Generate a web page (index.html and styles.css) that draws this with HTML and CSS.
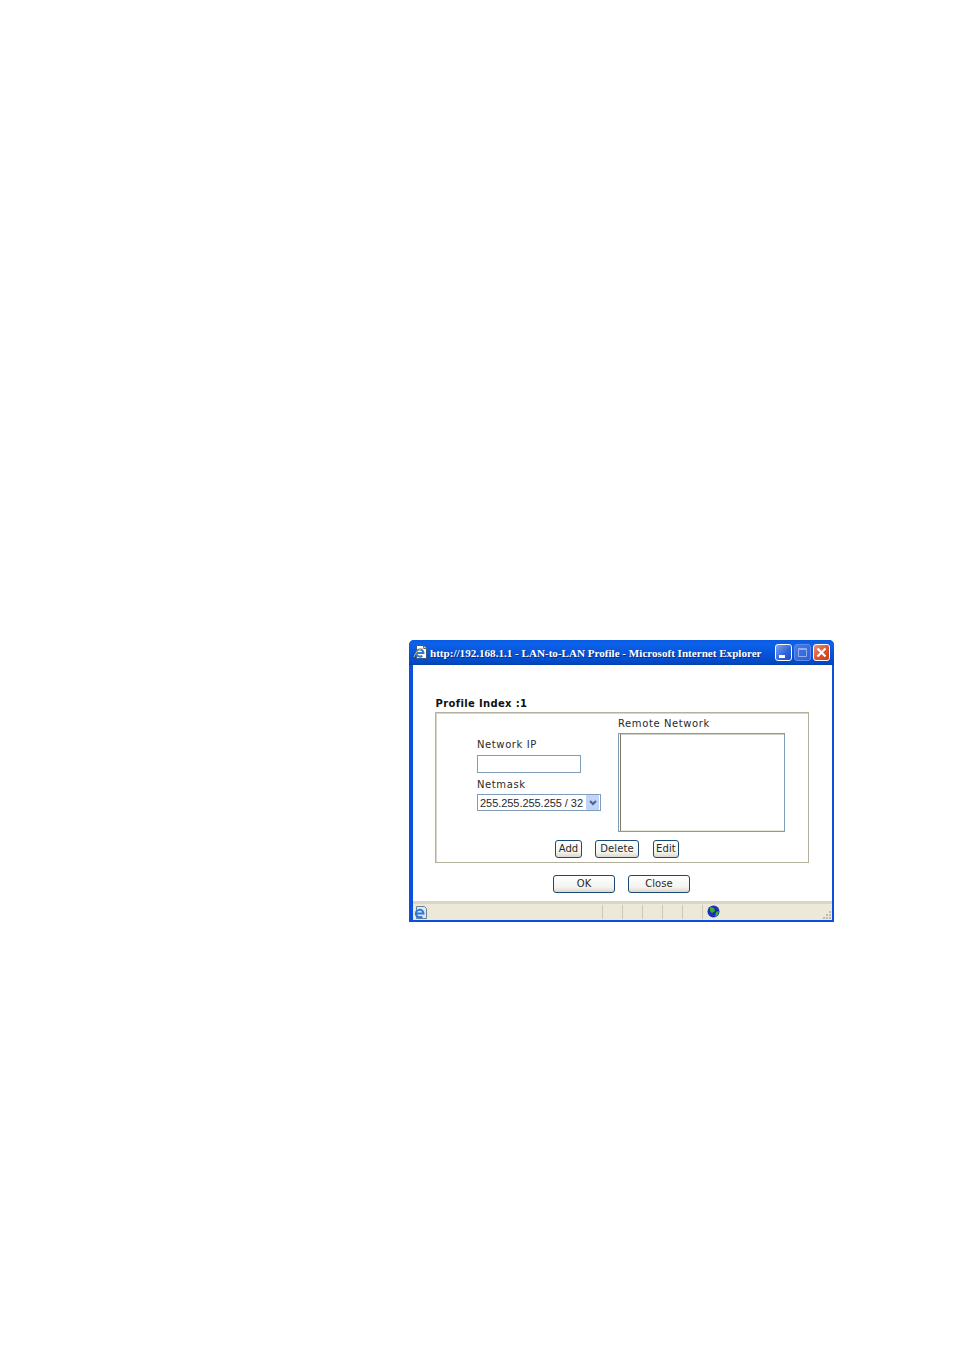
FILE: index.html
```html
<!DOCTYPE html>
<html lang="en">
<head>
  <meta charset="UTF-8">
  <title>LAN-to-LAN Profile</title>
  <link rel="stylesheet" href="styles.css">
</head>
<body>

<div class="window">
  <div class="titlebar">
    <svg class="title-icon" width="16" height="16" viewBox="0 0 16 16">
      <path d="M3.5 1.5h7l3 3v10h-10z" fill="#fff" stroke="#40587c"/>
      <path d="M10.5 1.5v3h3" fill="#cfdcec" stroke="#40587c"/>
      <path d="M3.5 9h7a3.6 3.6 0 1 0-1.2 2.7" fill="none" stroke="#2a78d8" stroke-width="2"/>
      <path d="M1 13C2.500 8 8 3.500 13 3.500" fill="none" stroke="#e8c050" stroke-width="1"/>
    </svg>
    <span class="title-text">http://192.168.1.1 - LAN-to-LAN Profile - Microsoft Internet Explorer</span>
    <div class="win-buttons">
      <div class="win-btn min"><svg width="17" height="17" viewBox="0 0 17 17"><rect x="4" y="11" width="6" height="3" fill="#fff"/></svg></div>
      <div class="win-btn max"><svg width="17" height="17" viewBox="0 0 17 17"><path d="M4.500 4.500h8v8h-8z M4.500 5.500h8" fill="none" stroke="#8fb0ee" stroke-width="1"/></svg></div>
      <div class="win-btn close"><svg width="17" height="17" viewBox="0 0 17 17"><path d="M4.500 4.500l8 8M12.500 4.500l-8 8" stroke="#fff" stroke-width="2.200"/></svg></div>
    </div>
  </div>

  <div class="client">
    <div class="profile-title">Profile Index :1</div>
    <div class="group">
      <div class="group-row">
        <div class="left-col">
          <label class="field-label">Network IP</label>
          <input class="ip-input" type="text">
          <label class="field-label netmask-label">Netmask</label>
          <div class="combo">
            <span>255.255.255.255 / 32</span>
            <div class="combo-arrow"><svg width="8" height="6" viewBox="0 0 8 6"><path d="M1 1l3 3 3-3" fill="none" stroke="#4a6490" stroke-width="2"/></svg></div>
          </div>
        </div>
        <div class="right-col">
          <label class="field-label">Remote Network</label>
          <div class="listbox"></div>
        </div>
      </div>
      <div class="small-buttons">
        <button class="btn btn-add">Add</button>
        <button class="btn btn-delete">Delete</button>
        <button class="btn btn-edit">Edit</button>
      </div>
    </div>
    <div class="main-buttons">
      <button class="btn btn-wide">OK</button>
      <button class="btn btn-wide">Close</button>
    </div>
  </div>

  <div class="statusbar">
    <svg class="status-ie" width="15" height="15" viewBox="0 0 15 15">
      <path d="M3.500 1.500h8l2 2v10h-10z" fill="#dfe6ee" stroke="#6f8098"/>
      <path d="M3 8.500h7.500a3.800 3.800 0 1 0-1.300 2.900" fill="none" stroke="#2a78d8" stroke-width="2"/>
    </svg>
    <div class="status-main"></div>
    <div class="status-cell"></div>
    <div class="status-cell"></div>
    <div class="status-cell"></div>
    <div class="status-cell"></div>
    <div class="status-cell"></div>
    <div class="status-zone">
      <svg width="13" height="13" viewBox="0 0 13 13">
        <circle cx="6.500" cy="6.500" r="6" fill="#1c2fb8"/>
        <path d="M3 2l4 1 1 3-3 2-2-2zM9 7l3-1-1 4-3 2z" fill="#3fae2a"/>
      </svg>
    </div>
    <svg class="grip" width="10" height="10" viewBox="0 0 10 10">
      <path d="M7 1h2v2H7zM4 4h2v2H4zM7 4h2v2H7zM1 7h2v2H1zM4 7h2v2H4zM7 7h2v2H7z" fill="#c0bca8"/>
    </svg>
  </div>
</div>

</body>
</html>
```

FILE: styles.css
```css
body {
  margin: 0;
  background: #fff;
  height: 1351px;
  box-sizing: border-box;
  padding: 640px 0 0 409px;
  overflow: hidden;
  color: #2a2a2a;
  font-family: "DejaVu Sans", sans-serif;
  font-size: 10px;
}

.window {
  width: 425px;
  height: 282px;
  display: flex;
  flex-direction: column;
  background: #0a50dc;
  border-radius: 5px 5px 0 0;
  overflow: hidden;
}

.titlebar {
  height: 25px;
  display: flex;
  align-items: center;
  padding: 0 4px 0 4px;
  background: linear-gradient(#0a5ae0, #0c62ea 15%, #0552d8 60%, #0449c4 90%, #0340ac);
}

.title-icon {
  flex: none;
  margin: -2px 1px 0 0;
}

.title-text {
  flex: 1;
  padding-top: 1px;
  color: #fff;
  font-family: "Liberation Serif", serif;
  font-weight: bold;
  font-size: 11.1px;
  white-space: nowrap;
  text-shadow: 1px 1px 0 #02308c;
}

.win-buttons {
  display: flex;
  gap: 2px;
}

.win-btn {
  width: 17px;
  height: 17px;
  box-sizing: border-box;
  border: 1px solid #fff;
  border-radius: 3px;
  background: linear-gradient(135deg, #7fa3ef, #2d62dc 60%, #2350c4);
}

.win-btn svg {
  display: block;
  margin: -1px;
}

.win-btn.max {
  border-color: #5f8cec;
  background: linear-gradient(135deg, #4a7be6, #2a5ed8);
}

.win-btn.close {
  background: linear-gradient(135deg, #ee9078, #e0502c 55%, #c83c18);
}

.client {
  flex: 1;
  margin: 0 2px 0 4px;
  background: #fff;
  padding: 32px 0 0 22px;
}

.profile-title {
  font-weight: bold;
  line-height: 14px;
  height: 15px;
  letter-spacing: 0.35px;
  color: #111;
  margin-left: 0.5px;
}

.group {
  width: 372px;
  height: 149px;
  border: 1px solid #b4b19e;
  box-shadow: inset 1px 1px 0 #d8d6c8;
}

.group-row {
  display: flex;
  height: 127px;
}

.left-col {
  width: 141px;
  padding: 26px 0 0 41px;
}

.field-label {
  display: block;
  line-height: 12px;
  height: 12px;
  letter-spacing: 0.6px;
}

.ip-input {
  display: block;
  width: 104px;
  height: 18px;
  box-sizing: border-box;
  margin: 4px 0 0;
  padding: 0;
  border: 1px solid #7f9db9;
  background: #fff;
}

.netmask-label {
  margin-top: 6px;
}

.combo {
  width: 124px;
  height: 17px;
  box-sizing: border-box;
  margin-top: 3px;
  display: flex;
  align-items: center;
  justify-content: space-between;
  border: 1px solid #7f9db9;
  padding: 0 1px 0 2px;
  background: #fff;
  font-family: "Liberation Sans", sans-serif;
  font-size: 11px;
  letter-spacing: -0.05px;
  white-space: nowrap;
}

.combo-arrow {
  width: 13px;
  height: 15px;
  display: flex;
  align-items: center;
  justify-content: center;
  background: #c1d3f8;
  border-radius: 1px;
}

.right-col {
  padding-top: 5px;
}

.listbox {
  width: 167px;
  height: 99px;
  box-sizing: border-box;
  margin-top: 3px;
  border: 1px solid #7f9db9;
  box-shadow: inset 1px 0 0 #fff, inset 2px 0 0 #7c7c68, inset 0 1px 0 #d0cfc6, inset 0 -1px 0 #ece9d8;
  background: #fff;
}

.small-buttons {
  display: flex;
  padding-left: 119px;
}

.btn {
  height: 18px;
  box-sizing: border-box;
  padding: 0 0 2px;
  border: 1px solid #1c4a78;
  border-radius: 3px;
  background: linear-gradient(#fff, #f4f3ee 70%, #dcd8ca);
  color: #2a2a2a;
  font-family: "DejaVu Sans", sans-serif;
  font-size: 10px;
  letter-spacing: 0.1px;
}

.btn-add {
  width: 27px;
}

.btn-delete {
  width: 44px;
  margin-left: 13px;
}

.btn-edit {
  width: 26px;
  margin-left: 14px;
}

.main-buttons {
  display: flex;
  gap: 13px;
  margin: 12px 0 0 118px;
}

.btn-wide {
  width: 62px;
}

.statusbar {
  height: 16px;
  margin: 0 2px 2px 4px;
  display: flex;
  align-items: center;
  background: #ece9d8;
  border-top: 3px solid #d9d6c8;
}

.status-ie {
  flex: none;
}

.status-main {
  width: 174px;
  height: 14px;
}

.status-cell {
  width: 19px;
  height: 14px;
  border-left: 1px solid #cbc8b6;
}

.status-zone {
  flex: 1;
  height: 14px;
  border-left: 1px solid #cbc8b6;
  padding-left: 4px;
}

.status-zone svg {
  display: block;
}

.grip {
  flex: none;
  align-self: flex-end;
}
```
